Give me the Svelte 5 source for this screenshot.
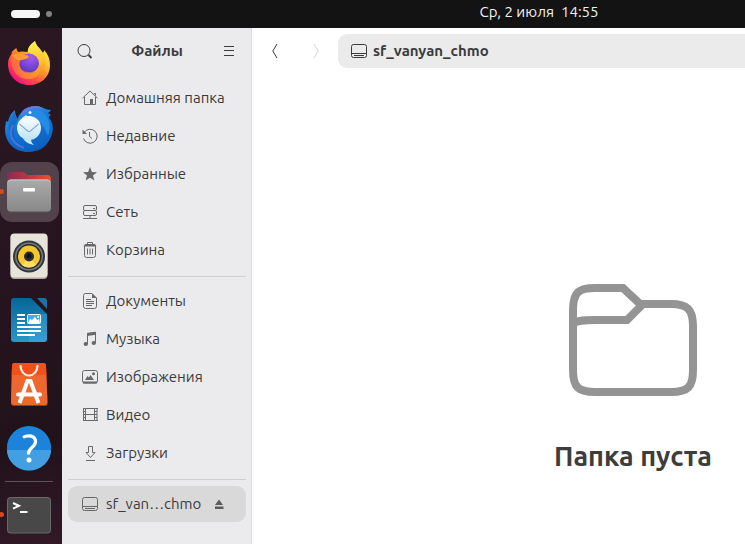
<script>
  const places = [
    { icon: 'home', label: 'Домашняя папка' },
    { icon: 'recent', label: 'Недавние' },
    { icon: 'star', label: 'Избранные' },
    { icon: 'network', label: 'Сеть' },
    { icon: 'trash', label: 'Корзина' }
  ];
  const folders = [
    { icon: 'document', label: 'Документы' },
    { icon: 'music', label: 'Музыка' },
    { icon: 'image', label: 'Изображения' },
    { icon: 'video', label: 'Видео' },
    { icon: 'download', label: 'Загрузки' }
  ];
  const apps = [
    { id: 'firefox', name: 'Firefox' },
    { id: 'thunderbird', name: 'Thunderbird' },
    { id: 'files', name: 'Файлы', active: true, running: true },
    { id: 'rhythmbox', name: 'Rhythmbox' },
    { id: 'writer', name: 'LibreOffice Writer' },
    { id: 'store', name: 'Центр приложений' },
    { id: 'help', name: 'Справка' }
  ];
</script>

{#snippet glyph(name)}
  <svg class="glyph" viewBox="0 0 16 16" aria-hidden="true">
    {#if name === 'home'}
      <path d="M.5 8.200 8 1l7.500 7.200M2.500 7v7.500H13.500V7M13.500 5.500V3.500H12" />
      <path class="solid" d="M8 9h3v6H8z" />
    {:else if name === 'recent'}
      <path d="M2.200 4.500A7 7 0 1 1 1.500 10.500M7.500 4v4.500l2.500 2" />
      <path class="solid" d="M.5 1.500V6H5z" />
    {:else if name === 'star'}
      <path class="solid" d="m8 1 1.900 4.900 5.100.3-4 3.300 1.400 5L8 11.700l-4.400 2.800 1.400-5-4-3.300 5.100-.3z" />
    {:else if name === 'network'}
      <rect x="1.500" y="1.500" width="13" height="5" rx="1.500" />
      <rect x="1.500" y="6.500" width="13" height="5" rx="1.500" />
      <path d="M11 4.500h2M11 9.500h2M1 14.500h14M8 12v2" />
    {:else if name === 'trash'}
      <path d="M2.500 4v9.500q0 2 2 2h7q2 0 2-2V4M5.500 6.500v6M8 6.500v6M10.500 6.500v6M5.500 2.500v-2h5v2" />
      <path class="solid" d="M3 2h10l1.500 2.500h-13z" />
    {:else if name === 'document'}
      <path d="M10 .5H3.500q-2 0-2 2v11q0 2 2 2h9q2 0 2-2V5zM4 6.500h5M4 8.500h8M4 10.500h8M4 12.500h6" />
      <path class="solid" d="M10 .5V5h4.500z" />
    {:else if name === 'music'}
      <path d="M5.500 13V2.500L13.500 1.500V12" />
      <path class="solid" d="M5 2 14 .8v3L5 5z" />
      <ellipse class="solid" cx="3.800" cy="13" rx="2.200" ry="2" />
      <ellipse class="solid" cx="11.800" cy="12" rx="2.200" ry="2" />
    {:else if name === 'image'}
      <rect x=".5" y="1.500" width="15" height="12.500" rx="2" />
      <path class="solid" d="M1 12.500h14v2H1zM3 11l2.500-4 1.500 1.500L8.500 6 12 11z" />
      <circle class="solid" cx="11.500" cy="4.700" r="1.500" />
    {:else if name === 'video'}
      <path d="M3.500 1.500h9v12h-9zM3.500 7.500h9M1 1.500h2.500M12.500 1.500H16M1 13.500h2.500M12.500 13.500H16" />
      <path d="M1.500 1v13M15 1v13" />
      <path d="M1 4.500h2.500M1 7.500h2.500M1 10.500h2.500M12.500 4.500H15M12.500 7.500H15M12.500 10.500H15" />
    {:else if name === 'download'}
      <path d="M6.500 1.500h4v6H13l-4.500 5L4 7.500h2.500zM4 15.500h9" />
    {:else if name === 'drive'}
      <rect x=".5" y="1.500" width="15" height="13" rx="2" />
      <path d="M1 10.500h14M3 12.500h10" />
    {:else if name === 'search'}
      <circle cx="7" cy="7.500" r="6" />
      <path class="thick" d="m11.500 12 3 3" />
    {:else if name === 'menu'}
      <path d="M3 3.500h10M3 7.500h10M3 12.500h10" />
    {:else if name === 'back'}
      <path d="M10 1 5.800 8l4.200 7" />
    {:else if name === 'forward'}
      <path d="m7 1 4.200 7L7 15" />
    {:else if name === 'eject'}
      <path class="solid" d="M8 3.500 12 9H4zM4 10.500h8.500V13H4z" />
    {/if}
  </svg>
{/snippet}

{#snippet appIcon(id)}
  <svg class="app-icon" viewBox="0 0 59 60" aria-hidden="true">
    {#if id === 'firefox'}
      <defs>
        <linearGradient id="fx-body" x1=".85" y1=".1" x2=".2" y2=".9">
          <stop offset="0" stop-color="#fff044" /><stop offset=".35" stop-color="#ffb52b" />
          <stop offset=".65" stop-color="#ff6137" /><stop offset="1" stop-color="#f4147c" />
        </linearGradient>
        <linearGradient id="fx-flame" x1=".5" y1="0" x2=".6" y2="1">
          <stop offset="0" stop-color="#fff34d" /><stop offset=".6" stop-color="#ffbd2e" /><stop offset="1" stop-color="#ff7a2d" />
        </linearGradient>
        <radialGradient id="fx-globe" cx=".6" cy=".2" r=".9">
          <stop offset="0" stop-color="#a45be8" /><stop offset=".6" stop-color="#7142d4" /><stop offset="1" stop-color="#4d36a9" />
        </radialGradient>
        <linearGradient id="fx-head" x1="0" y1="0" x2="1" y2=".5">
          <stop offset="0" stop-color="#ff7138" /><stop offset="1" stop-color="#ffae28" />
        </linearGradient>
      </defs>
      <path fill="url(#fx-body)" d="M14 16c1-1 1.500-1.500 2.500-2 0 1.500.5 3 2 4 3-1 6-.5 9 0C28 13 31 10 35 7c1 5 5 7 7.500 12 1-.5 1.500-1 1.500-3 4 4 6 9 6 15 0 12-9 20-21 20S8 42 8 30c0-5 2-8 3.500-10 0-1.500.5-3 2.500-4Z" />
      <path fill="url(#fx-flame)" d="M35 7c1 5 5 7 8 12 5 10 2 20-5 25 4-6 3-12 0-16-2-4-6-7-10-10 0-5 3-8 7-11Z" />
      <circle cx="29" cy="29.500" r="10" fill="url(#fx-globe)" />
      <path fill="url(#fx-head)" d="M11 22c4-4 10-4 15-1l3 2c-3 2-6 2-9 4-2 6 2 11 8 11 6 1 10-3 11-7 3 9-3 15-12 14-11-1-17-11-16-23Z" opacity=".65" />
      <path fill="#ff9c30" d="M12 21c5-2 10-1 15 0l2 2c-2 2-6 3-10 3-2 0-5-2-7-5Z" />
    {:else if id === 'thunderbird'}
      <defs>
        <linearGradient id="tb-body" x1=".3" y1="0" x2=".7" y2="1">
          <stop offset="0" stop-color="#3099e8" /><stop offset=".45" stop-color="#1373d4" /><stop offset="1" stop-color="#0c5dbc" />
        </linearGradient>
        <linearGradient id="tb-mail" x1="0" y1="0" x2="0" y2="1">
          <stop offset="0" stop-color="#fff" /><stop offset="1" stop-color="#bce3fb" />
        </linearGradient>
      </defs>
      <path fill="url(#tb-body)" d="M21 15c3-5 8-7 15-7 6 0 9 4 15 4-1 2-2 2-3 3l3 2c-2 1-2 2-2 3 5 5 5 14 1 21-4 8-11 13-22 13C15 54 5 45 5 31c0-3 1-6 1-8l2 1c1-5 3-9 7-12 0 4 1 7 3 9 0-2 1-4 3-6Z" />
      <path fill="#7770df" d="M21 17c3-6 9-9 15-9 3 0 5 1 7 3-7-2-11-1-15 2-2 2-3 4-7 4Z" />
      <path fill="#258ce6" d="M22 17c5-6 13-8 19-4 8 5 11 15 7 25-3-8-7-14-13-17-5-2-9-1-13-4Z" />
      <path fill="#0d55b2" d="M15 12c0 5 1 8 3 10-5 6-6 16-2 23C9 39 7 28 10 20Z" opacity=".45" />
      <path fill="none" stroke="#687be4" stroke-width="2" d="M13 27c-5 9-1 19 11 23" opacity=".65" />
      <circle cx="29" cy="30" r="12" fill="url(#tb-mail)" />
      <path fill="#c2e8fb" d="M23 40c2 4 6 6 11 7-2-2-3-3-3-6Z" />
      <path fill="none" stroke="#8badd0" stroke-width="1.200" d="m19.500 26 8 7q1.500 1 3 0l8-7" />
      <path fill="#dff4ff" d="m22 20 4-3 3 3Z" />
      <circle cx="30" cy="14.500" r="1.500" fill="#e6f5ff" />
    {:else if id === 'files'}
      <defs>
        <linearGradient id="f-back"><stop offset="0" stop-color="#8d2957" /><stop offset=".5" stop-color="#ba3843" /><stop offset="1" stop-color="#e9541f" /></linearGradient>
        <linearGradient id="f-front" x2="0" y2="1"><stop offset="0" stop-color="#aaa" /><stop offset="1" stop-color="#898989" /></linearGradient>
      </defs>
      <path fill="url(#f-back)" d="M7 21v-7q0-4 4-4h12q2 0 3 2l1 1h20q4 0 4 4v8H7Z" />
      <rect x="7" y="18" width="44" height="32.500" rx="4" fill="#555" />
      <rect x="7" y="17.500" width="44" height="32" rx="4" fill="url(#f-front)" />
      <path fill="none" stroke="#c8c8c8" d="M8 20q1-2 3-2h36q2 0 3 2" />
      <rect x="23" y="26" width="12" height="3.500" rx="1" fill="#fff" />
    {:else if id === 'rhythmbox'}
      <rect x="10.500" y="8" width="37" height="45" rx="4" fill="#aaa69d" />
      <rect x="10.500" y="7.500" width="37" height="44" rx="4" fill="#e7e4da" />
      <circle cx="29" cy="30.500" r="16" fill="#34373e" />
      <circle cx="29" cy="30.500" r="14" fill="#777b80" />
      <circle cx="29" cy="30.500" r="12.500" fill="#222832" />
      <circle cx="29" cy="30.500" r="11" fill="#f7c62c" />
      <path fill="#ffdc68" d="m29 30.500-7 8.500a11 11 0 0 0 14 0Z" />
      <circle cx="29" cy="30.500" r="5" fill="#292c32" />
      <circle cx="29" cy="30" r="2.500" fill="#101319" />
    {:else if id === 'writer'}
      <defs><linearGradient id="w-page" x2="0" y2="1"><stop offset="0" stop-color="#08659a" /><stop offset=".45" stop-color="#147cae" /><stop offset="1" stop-color="#2699cc" /></linearGradient></defs>
      <path fill="url(#w-page)" d="M14 8h17l16 16v25q0 3-3 3H14q-3 0-3-3V11q0-3 3-3Z" />
      <path fill="#4bb1df" d="M29 24h18v25q0 3-3 3H29Z" opacity=".35" />
      <path fill="#1675a4" d="M37 8h7q3 0 3 3v8Z" />
      <path stroke="#fff" stroke-width="2" d="M17 25h8M17 29h8M17 33h8M17 37h24M17 41h24M17 45h18" />
      <rect x="27.500" y="24.500" width="13" height="9" rx="1" fill="#45aee0" stroke="#fff" />
      <path fill="#fff" d="m28 33 2-4 2 1 3-3 2 3 2-1 1 4Z" /><circle cx="38" cy="27" r="1" fill="#fff" />
    {:else if id === 'store'}
      <path fill="#a73713" d="M15 9h28q3 0 3 3l1.500 38q0 2-3 2H14q-3 0-3-3l1-37q0-3 3-3Z" />
      <path fill="#ed672f" d="M15 9h28q3 0 3 3l1.500 36q0 3-3 3H14q-3 0-3-3l1-36q0-3 3-3Z" />
      <path fill="#f15019" d="M15 9h28q3 0 3 3l.3 9H11.700l.3-9q0-3 3-3Z" />
      <path fill="none" stroke="#fff2e8" stroke-width="2" d="M20.500 11c0 14 17 14 17 0" />
      <path fill="none" stroke="#fff" stroke-width="4" d="m19.500 49 8-22h3l8 22" />
      <path stroke="#fff" stroke-width="4" stroke-linecap="round" d="M18 40.500h22" />
    {:else if id === 'help'}
      <circle cx="29" cy="30.500" r="22" fill="#1468a8" />
      <circle cx="29" cy="30" r="22" fill="#1b83da" />
      <path fill="#419fe2" d="M7 32a22 20.500 0 0 0 44 0Z" />
      <path fill="none" stroke="#fff" stroke-width="3.200" d="M23 19.500c5-3 12.500-2 12.500 4 0 6-7 6-7 12v1" />
      <circle cx="29" cy="42" r="2.500" fill="#fff" />
    {:else if id === 'terminal'}
      <rect x="7" y="12" width="44" height="36.500" rx="4" fill="#696969" />
      <rect x="8" y="13" width="42" height="34.500" rx="3" fill="#484848" />
      <path fill="none" stroke="#fff" stroke-width="2" d="m13 18 6 2.800-6 2.800M20 27h7.500" />
    {/if}
  </svg>
{/snippet}

{#snippet row(item)}
  <li><a class="place" href="#{item.icon}">{@render glyph(item.icon)}<span>{item.label}</span></a></li>
{/snippet}

<div class="desktop">
  <header class="topbar">
    <button class="workspaces" aria-label="Обзор"><i class="pill"></i><i class="dot"></i></button>
    <button class="clock"><span>Ср, 2 июля</span><time>14:55</time></button>
  </header>

  <div class="workspace">
    <nav class="dock" aria-label="Приложения">
      {#each apps as app}
        <button class="app" class:active={app.active} class:running={app.running} aria-label={app.name}>
          {@render appIcon(app.id)}
        </button>
      {/each}
      <hr />
      <button class="app running" aria-label="Терминал">{@render appIcon('terminal')}</button>
    </nav>

    <div class="window">
      <aside class="sidebar">
        <div class="sidebar-head">
          <button class="tool" aria-label="Поиск">{@render glyph('search')}</button>
          <h1>Файлы</h1>
          <button class="tool" aria-label="Меню">{@render glyph('menu')}</button>
        </div>
        <ul>{#each places as item}{@render row(item)}{/each}</ul>
        <hr />
        <ul>{#each folders as item}{@render row(item)}{/each}</ul>
        <hr />
        <ul>
          <li class="mount">
            <a class="place" href="#drive" aria-current="page">{@render glyph('drive')}<span>sf_van…chmo</span></a>
            <button class="eject" aria-label="Извлечь">{@render glyph('eject')}</button>
          </li>
        </ul>
      </aside>

      <main>
        <div class="toolbar">
          <button class="tool" aria-label="Назад">{@render glyph('back')}</button>
          <button class="tool" aria-label="Вперёд" disabled>{@render glyph('forward')}</button>
          <button class="path">{@render glyph('drive')}<span>sf_vanyan_chmo</span></button>
        </div>
        <section class="empty">
          <svg class="folder" viewBox="0 0 128 112" aria-hidden="true">
            <path d="M4 40V26C4 8 10 4 26 4h28l17 16h31c16 0 22 5 22 22v44c0 17-5 22-22 22H26C9 108 4 103 4 86V38" />
            <path d="M4 40c3-3 8-4 22-4h32l15-15" />
          </svg>
          <h2>Папка пуста</h2>
        </section>
      </main>
    </div>
  </div>
</div>

<style>
  :global(body) { margin: 0; }
  .desktop {
    display: flex;
    flex-direction: column;
    height: 100vh;
    overflow: hidden;
    background: #25151f;
    color: #3b3b3e;
    font: 15px/20px Ubuntu, "Noto Sans", sans-serif;
  }
  button {
    margin: 0;
    padding: 0;
    border: 0;
    background: none;
    color: inherit;
    font: inherit;
  }
  ul { margin: 0; padding: 0; list-style: none; }
  h1, h2 { margin: 0; }
  .topbar {
    display: grid;
    grid-template-columns: 1fr auto 1fr;
    flex: none;
    align-items: center;
    min-width: 1078px;
    height: 28px;
    background: #131313;
    color: #f2f2f2;
  }
  .workspaces { display: flex; align-items: center; gap: 6px; padding-left: 11px; height: 24px; }
  .pill { width: 29px; height: 8px; border-radius: 4px; background: #f6f6f6; }
  .dot { width: 6px; height: 6px; border-radius: 50%; background: #828282; }
  .clock { display: flex; gap: 7px; height: 28px; font-size: 14px; line-height: 24px; }
  .clock { align-items: flex-start; font-size: 15px; }
  .workspace { display: flex; flex: 1; min-height: 0; }
  .dock {
    display: flex;
    flex: none;
    flex-direction: column;
    gap: 4px;
    box-sizing: border-box;
    width: 62px;
    padding: 6px 3px 0 0;
    background: linear-gradient(165deg, #2a1722 0%, #25141f 55%, #21121a 80%, #321a27 100%);
  }
  .app { position: relative; flex: none; height: 60px; border-radius: 12px; }
  .app.active { background: #51424b; }
  .app.running::before {
    content: "";
    position: absolute;
    top: 27px;
    left: -1px;
    width: 5px;
    height: 5px;
    border-radius: 50%;
    background: #d9481c;
  }
  .app-icon { display: block; width: 59px; height: 60px; }
  .dock hr { flex: none; width: 48px; height: 1px; margin: -1px 0 -1px 5px; border: 0; background: #5f5359; }
  .window { display: flex; flex: 1; min-width: 952px; background: #fff; }
  .sidebar {
    flex: none;
    box-sizing: border-box;
    width: 190px;
    padding: 0 5px 0 6px;
    border-right: 1px solid #dcdcde;
    background: #ebebed;
  }
  .sidebar-head {
    display: flex;
    align-items: center;
    justify-content: space-between;
    height: 46px;
    margin-bottom: 6px;
  }
  h1 { font-size: 15px; line-height: 20px; }
  .tool { display: grid; place-items: center; width: 34px; height: 34px; }
  .tool:disabled { color: #d4d4d4; }
  .glyph { display: block; flex: none; width: 16px; height: 16px; fill: none; stroke: currentColor; }
  .glyph .solid { fill: currentColor; stroke: none; }
  .glyph .thick { stroke-width: 2; }
  .place {
    display: flex;
    align-items: center;
    gap: 8px;
    height: 36px;
    padding-left: 14px;
    color: inherit;
    text-decoration: none;
    white-space: nowrap;
  }
  .place .glyph { color: #68686b; }
  li + li { margin-top: 2px; }
  .sidebar hr { height: 1px; margin: 8px 0 6px; border: 0; background: #cfcfd1; }
  .mount { display: flex; justify-content: space-between; border-radius: 9px; background: #d9d9d9; }
  .eject { padding-right: 19px; color: #5b5b5d; }
  main { display: flex; flex: 1; flex-direction: column; }
  .toolbar { display: flex; align-items: center; gap: 6px; height: 46px; padding: 0 6px; }
  .path {
    display: flex;
    flex: 1;
    align-items: center;
    gap: 6px;
    height: 34px;
    padding-left: 13px;
    border-radius: 9px;
    background: #ebebeb;
    font-weight: 700;
  }
  .empty { display: flex; flex-direction: column; align-items: center; padding-top: 210px; }
  .folder { width: 128px; height: 112px; fill: none; stroke: #949494; stroke-width: 8; }
  h2 { margin-top: 42px; color: #3d3d3d; font-size: 27px; line-height: 36px; }
</style>
